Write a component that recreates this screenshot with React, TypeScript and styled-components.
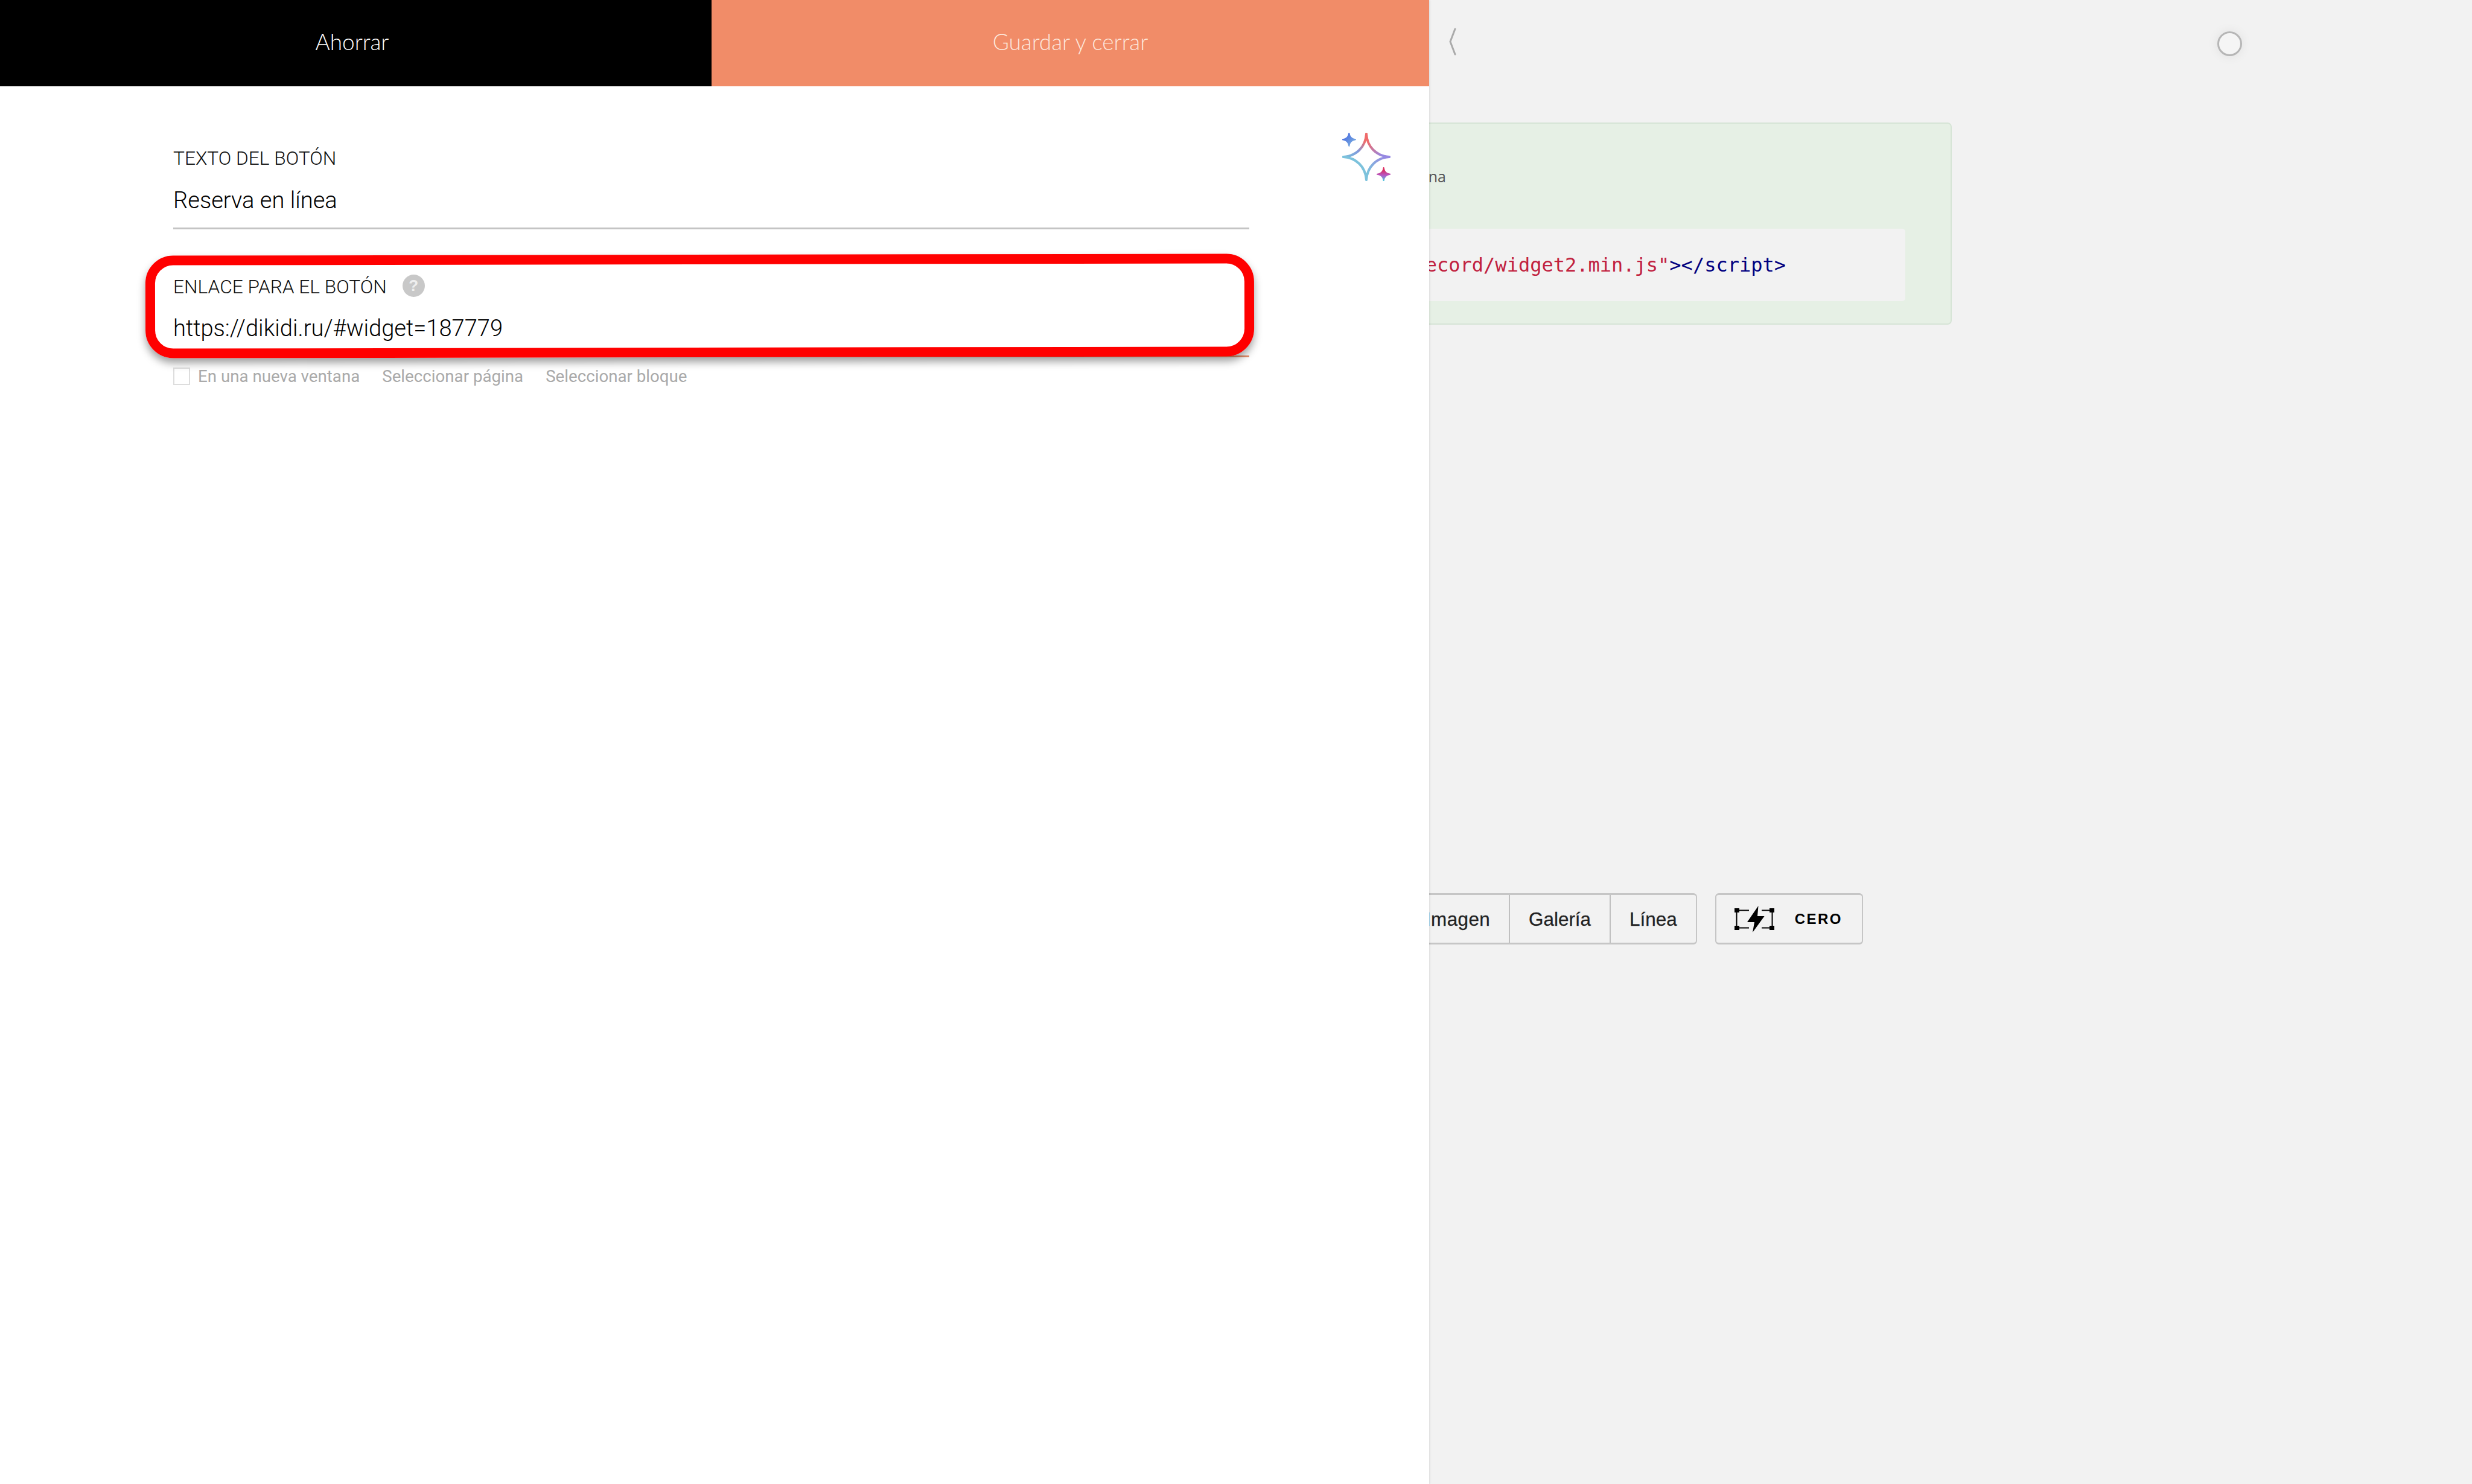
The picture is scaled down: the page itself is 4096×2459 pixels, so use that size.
import React from "react";
import styled, { createGlobalStyle } from "styled-components";

const Global = createGlobalStyle`
  html, body { margin: 0; padding: 0; background: #f2f2f2; }
  * { box-sizing: border-box; }
`;

const Page = styled.div`
  display: flex;
  width: 4096px;
  height: 2459px;
  overflow: hidden;
  background: #f2f2f2;
  font-family: "Liberation Sans", Arial, sans-serif;
`;

const Panel = styled.aside`
  position: relative;
  z-index: 2;
  flex: 0 0 2368px;
  background: #fff;
  box-shadow: 1px 0 3px rgba(0, 0, 0, 0.1);
`;

const Header = styled.header`
  display: flex;
  height: 143px;
`;

const HeaderButton = styled.div<{ $tone: "dark" | "accent" }>`
  display: flex;
  align-items: center;
  justify-content: center;
  width: ${(p) => (p.$tone === "dark" ? "1179px" : "1189px")};
  padding-right: ${(p) => (p.$tone === "dark" ? "12px" : "0")};
  padding-bottom: 6px;
  background: ${(p) => (p.$tone === "dark" ? "#000" : "#f18c68")};
  color: ${(p) => (p.$tone === "dark" ? "#fff" : "#fde6da")};
  font-family: "Lato", sans-serif;
  font-weight: 300;
  font-size: 37px;
`;

const FormArea = styled.div`
  display: flex;
  align-items: flex-start;
  padding: 77px 0 0 287px;
`;

const Fields = styled.div`
  flex: 0 0 1783px;
  margin-top: 26px;
`;

const Sparkle = styled.svg`
  flex: none;
  width: 80px;
  height: 80px;
  margin-left: 154px;
`;

const Field = styled.div`
  position: relative;
  & + & {
    margin-top: 79px;
  }
`;

const LabelRow = styled.div`
  display: flex;
  align-items: center;
  gap: 26px;
  height: 34px;
`;

const Label = styled.label`
  font-family: "Roboto", sans-serif;
  font-weight: 300;
  font-size: 31.7px;
  line-height: 34px;
  color: #111;
  white-space: nowrap;
`;

const Help = styled.span`
  display: flex;
  align-items: center;
  justify-content: center;
  flex: none;
  width: 37px;
  height: 37px;
  margin-top: -5px;
  border-radius: 50%;
  background: #c8c8c8;
  color: #eee;
  font-size: 26px;
  font-weight: 700;
`;

const Value = styled.div<{ $line: string; $top: number }>`
  height: 93px;
  margin-top: ${(p) => p.$top}px;
  border-bottom: 3px solid ${(p) => p.$line};
  font-family: "Roboto", sans-serif;
  font-weight: 300;
  font-size: 38.1px;
  line-height: 90px;
  color: #000;
  white-space: nowrap;
`;

const Annotation = styled.div`
  position: absolute;
  left: -46px;
  top: -37px;
  width: 1837px;
  height: 170px;
  border: 16px solid #f00;
  border-radius: 46px;
  box-shadow: 0 8px 14px rgba(0, 0, 0, 0.38);
  transform: rotate(-0.1deg);
  pointer-events: none;
`;

const Options = styled.div`
  display: flex;
  align-items: center;
  margin-top: 17px;
  color: #aaa;
  font-family: "Roboto", sans-serif;
  font-weight: 400;
  font-size: 27.7px;
  line-height: 29px;
`;

const Check = styled.span`
  flex: none;
  width: 28px;
  height: 29px;
  margin-right: 13px;
  border: 2px solid #ddd;
`;

const OptionLink = styled.span`
  margin-left: 37px;
`;

const Workspace = styled.main`
  flex: 1;
  min-width: 0;
  display: flex;
  flex-direction: column;
`;

const TopBar = styled.div`
  display: flex;
  justify-content: space-between;
  align-items: flex-start;
  height: 143px;
  padding: 46px 381px 0 33px;
`;

const Chevron = styled.svg`
  width: 12px;
  height: 46px;
`;

const Circle = styled.span`
  width: 41px;
  height: 41px;
  margin-top: 6px;
  border: 3px solid #b6b6b6;
  border-radius: 50%;
  background: #f5f5f5;
  box-shadow: 0 0 18px rgba(0, 0, 0, 0.08);
`;

const Notice = styled.section`
  width: 1206px;
  height: 335px;
  margin: 60px 0 0 -340px;
  padding: 69px 75px 0 0;
  border: 2px solid #d6e4d6;
  border-radius: 7px;
  background: #e6f0e5;
`;

const Lead = styled.p`
  margin: 0;
  padding-right: 761px;
  font-family: "Open Sans", sans-serif;
  font-size: 25px;
  line-height: 36px;
  text-align: right;
  color: #555;
`;

const CodeBox = styled.div`
  height: 120px;
  margin-top: 69px;
  padding-right: 198px;
  border-radius: 5px;
  background: #f2f2f2;
  font-family: "DejaVu Sans Mono", monospace;
  font-size: 32px;
  line-height: 120px;
  text-align: right;
  white-space: nowrap;
`;

const Tag = styled.span`
  color: #000080;
`;

const Str = styled.span`
  color: #c1213f;
`;

const Tools = styled.div`
  display: flex;
  align-items: stretch;
  height: 85px;
  margin: 942px 0 0 -39px;
`;

const Group = styled.div`
  display: flex;
  border: 2px solid #c6c6c6;
  border-top-width: 3px;
  border-bottom-width: 3px;
  border-radius: 6px;
`;

const GroupItem = styled.div`
  display: flex;
  align-items: center;
  padding: 3px 31px 0;
  font-size: 31.4px;
  color: #222;
  -webkit-text-stroke: 0.3px #222;
  &:first-child {
    letter-spacing: 0.4px;
  }
  & + & {
    border-left: 2px solid #c0c0c0;
  }
`;

const ZeroButton = styled.div`
  display: flex;
  align-items: center;
  gap: 34px;
  margin-left: 30px;
  padding: 0 32px 0 30px;
  border: 2px solid #c6c6c6;
  border-top-width: 3px;
  border-bottom-width: 3px;
  border-radius: 6px;
`;

const ZeroIcon = styled.svg`
  width: 66px;
  height: 44px;
`;

const ZeroLabel = styled.span`
  font-weight: 700;
  font-size: 24px;
  letter-spacing: 2.5px;
  color: #000;
`;

export default function App() {
  return (
    <Page>
      <Global />
      <Panel>
        <Header>
          <HeaderButton $tone="dark">Ahorrar</HeaderButton>
          <HeaderButton $tone="accent">Guardar y cerrar</HeaderButton>
        </Header>
        <FormArea>
          <Fields>
            <Field>
              <LabelRow>
                <Label>TEXTO DEL BOTÓN</Label>
              </LabelRow>
              <Value $line="#c4c4c4" $top={7}>Reserva en línea</Value>
            </Field>
            <Field>
              <LabelRow>
                <Label>ENLACE PARA EL BOTÓN</Label>
                <Help>?</Help>
              </LabelRow>
              <Value $line="#e8916f" $top={6}>https://dikidi.ru/#widget=187779</Value>
              <Annotation />
              <Options>
                <Check />
                <span>En una nueva ventana</span>
                <OptionLink>Seleccionar página</OptionLink>
                <OptionLink>Seleccionar bloque</OptionLink>
              </Options>
            </Field>
          </Fields>
          <Sparkle viewBox="0 0 120 120" fill="none">
            <defs>
              <linearGradient id="sTR" x1="60" y1="3" x2="117" y2="60" gradientUnits="userSpaceOnUse">
                <stop offset="0.2" stopColor="#ef6b6b" />
                <stop offset="0.8" stopColor="#9688e2" />
              </linearGradient>
              <linearGradient id="sTL" x1="60" y1="3" x2="3" y2="60" gradientUnits="userSpaceOnUse">
                <stop offset="0.2" stopColor="#ef6b6b" />
                <stop offset="0.55" stopColor="#7f98dc" />
                <stop offset="1" stopColor="#7cc2dc" />
              </linearGradient>
              <linearGradient id="sBR" x1="117" y1="60" x2="60" y2="117" gradientUnits="userSpaceOnUse">
                <stop offset="0.1" stopColor="#9688e2" />
                <stop offset="0.8" stopColor="#7cc2dc" />
              </linearGradient>
              <linearGradient id="sA" x1="0" y1="0" x2="34" y2="34" gradientUnits="userSpaceOnUse">
                <stop offset="0.2" stopColor="#4c70e0" />
                <stop offset="1" stopColor="#85bbe0" />
              </linearGradient>
              <linearGradient id="sB" x1="103" y1="87" x2="103" y2="119" gradientUnits="userSpaceOnUse">
                <stop offset="0.15" stopColor="#dd2a5e" />
                <stop offset="0.6" stopColor="#b45ac8" />
                <stop offset="1" stopColor="#4cc4dc" />
              </linearGradient>
            </defs>
            <g strokeWidth="6" strokeLinecap="round">
              <path d="M60 3 C62 35 85 58 117 60" stroke="url(#sTR)" />
              <path d="M60 3 C58 35 35 58 3 60" stroke="url(#sTL)" />
              <path d="M117 60 C85 62 62 85 60 117" stroke="url(#sBR)" />
              <path d="M3 60 C35 62 58 85 60 117" stroke="#7cc2dc" />
            </g>
            <path
              d="M17 1 C18 10 24 16 33 17 C24 18 18 24 17 33 C16 24 10 18 1 17 C10 16 16 10 17 1 Z"
              fill="url(#sA)" stroke="url(#sA)" strokeWidth="3" strokeLinejoin="round"
            />
            <path
              d="M103 87 C104 96 110 102 119 103 C110 104 104 110 103 119 C102 110 96 104 87 103 C96 102 102 96 103 87 Z"
              fill="url(#sB)" stroke="url(#sB)" strokeWidth="3" strokeLinejoin="round"
            />
          </Sparkle>
        </FormArea>
      </Panel>
      <Workspace>
        <TopBar>
          <Chevron viewBox="0 0 12 46" fill="none">
            <path d="M10 2 L2 23 L10 44" stroke="#aaa" strokeWidth="3" strokeLinecap="round" strokeLinejoin="round" />
          </Chevron>
          <Circle />
        </TopBar>
        <Notice>
          <Lead>Código para la página</Lead>
          <CodeBox>
            <Tag>&lt;script src=</Tag>
            <Str>"/record/widget2.min.js"</Str>
            <Tag>&gt;&lt;/script&gt;</Tag>
          </CodeBox>
        </Notice>
        <Tools>
          <Group>
            <GroupItem>Imagen</GroupItem>
            <GroupItem>Galería</GroupItem>
            <GroupItem>Línea</GroupItem>
          </Group>
          <ZeroButton>
            <ZeroIcon viewBox="0 0 66 44">
              <path d="M0 4 H8 V11 H0 Z M58 4 H66 V11 H58 Z M0 33 H8 V40 H0 Z M58 33 H66 V40 H58 Z" fill="#000" />
              <path d="M8 7.5 H24 M45 7.5 H58 M8 36.5 H24 M45 36.5 H58 M3.5 11 V33 M62.5 11 V33" stroke="#000" strokeWidth="2" />
              <path d="M39.5 0 L21 27 H33 L30 44 L49.6 17 H38 Z" fill="#000" />
            </ZeroIcon>
            <ZeroLabel>CERO</ZeroLabel>
          </ZeroButton>
        </Tools>
      </Workspace>
    </Page>
  );
}
